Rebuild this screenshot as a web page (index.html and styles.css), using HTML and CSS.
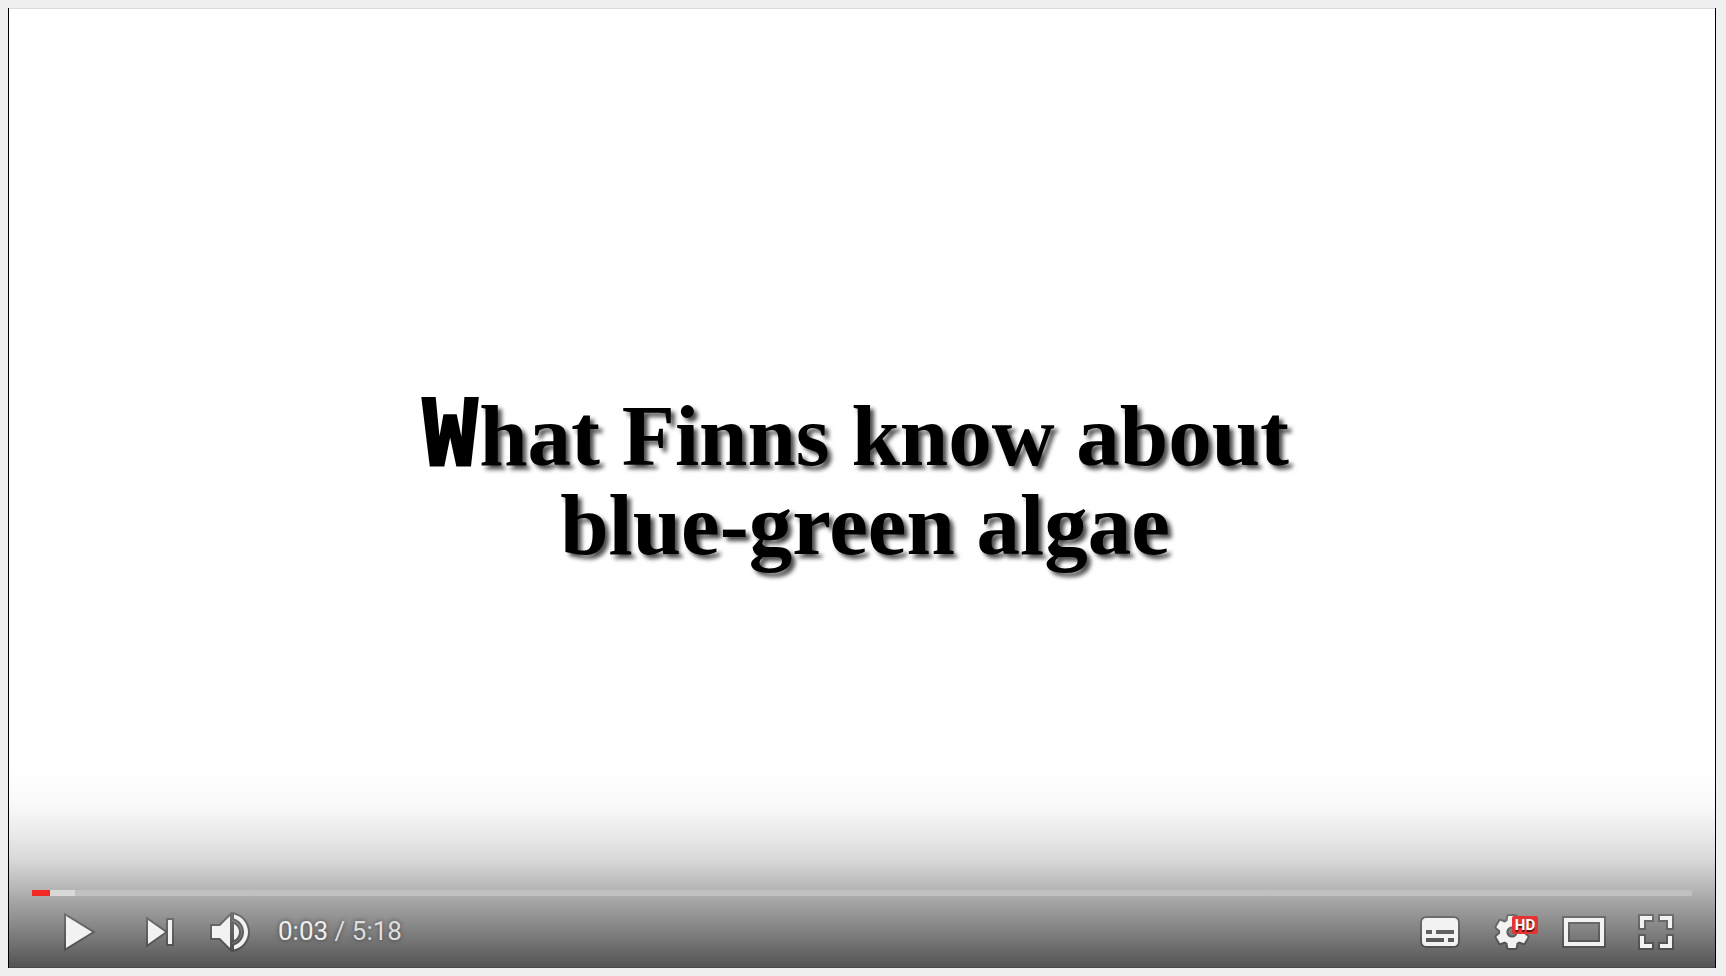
FILE: index.html
```html
<!DOCTYPE html>
<html lang="en">
<head>
<meta charset="utf-8">
<title>What Finns know about blue-green algae</title>
<link rel="stylesheet" href="styles.css">
</head>
<body>
<main class="player">
  <h1 class="title">
    <span class="title-line title-first"><span class="initial">W</span>hat Finns know about</span>
    <span class="title-line">blue-green algae</span>
  </h1>
  <div class="chrome">
    <input class="seek" type="range" min="0" max="318" value="3" aria-label="Seek">
    <div class="controls">
      <button class="btn btn-play" type="button" aria-label="Play">
        <svg class="icon" viewBox="0 0 36 36"><path d="M12 26V10L25 18Z"/></svg>
      </button>
      <button class="btn" type="button" aria-label="Next">
        <svg class="icon" viewBox="0 0 36 36"><path d="M12 24V12L20.5 18ZM22 12v12h2V12Z"/></svg>
      </button>
      <button class="btn" type="button" aria-label="Mute">
        <svg class="icon" viewBox="0 0 36 36"><path d="M8 21H12L17 26V10L12 15H8ZM19 14V22C20.48 21.32 21.5 19.77 21.5 18C21.5 16.26 20.48 14.74 19 14ZM19 11.29C21.89 12.15 24 14.83 24 18C24 21.17 21.89 23.85 19 24.71V26.77C23.01 25.86 26 22.28 26 18C26 13.72 23.01 10.14 19 9.23Z"/></svg>
      </button>
      <div class="time"><span class="current">0:03</span> / 5:18</div>
      <button class="btn btn-right" type="button" aria-label="Subtitles">
        <svg class="icon" viewBox="0 0 36 36"><path fill-rule="evenodd" d="M11 11C9.9 11 9 11.9 9 13V23C9 24.1 9.9 25 11 25H25C26.1 25 27 24.1 27 23V13C27 11.9 26.1 11 25 11ZM11 17H14V19H11ZM20 23H11V21H20ZM25 23H22V21H25ZM25 19H16V17H25Z"/></svg>
      </button>
      <button class="btn" type="button" aria-label="Settings">
        <svg class="icon" viewBox="0 0 36 36"><path fill-rule="evenodd" d="m23.94 18.78c.03-.25.05-.51.05-.78 0-.27-.02-.52-.05-.78l1.68-1.32c.15-.12.19-.33.09-.51l-1.6-2.76c-.09-.17-.31-.24-.48-.17l-1.99.8c-.41-.32-.86-.58-1.35-.78l-.3-2.12c-.02-.19-.19-.33-.39-.33h-3.2c-.2 0-.36.14-.39.33l-.3 2.12c-.48.2-.93.47-1.35.78l-1.99-.8c-.18-.07-.39 0-.48.17l-1.6 2.76c-.1.17-.05.39.09.51l1.68 1.32c-.03.25-.05.52-.05.78 0 .26.02.52.05.78l-1.68 1.32c-.15.12-.19.33-.09.51l1.6 2.76c.09.17.31.24.48.17l1.99-.8c.41.32.86.58 1.35.78l.3 2.12c.02.19.19.33.39.33h3.2c.2 0 .36-.14.39-.33l.3-2.12c.48-.2.93-.47 1.35-.78l1.99.8c.18.07.39 0 .48-.17l1.6-2.76c.09-.17.05-.39-.09-.51zm-5.94 2.01c-1.54 0-2.8-1.25-2.8-2.8 0-1.54 1.25-2.8 2.8-2.8 1.54 0 2.8 1.25 2.8 2.8 0 1.54-1.25 2.8-2.8 2.8z"/></svg>
        <span class="badge">HD</span>
      </button>
      <button class="btn" type="button" aria-label="Theater mode">
        <svg class="icon" viewBox="0 0 36 36"><path fill-rule="evenodd" d="M8 11H28V25H8ZM10 13V23H26V13Z"/></svg>
      </button>
      <button class="btn" type="button" aria-label="Full screen">
        <svg class="icon" viewBox="0 0 36 36"><path d="M10 16h2v-4h4v-2h-6ZM20 10v2h4v4h2v-6ZM24 24h-4v2h6v-6h-2ZM12 20h-2v6h6v-2h-4Z"/></svg>
      </button>
    </div>
  </div>
</main>
</body>
</html>
```
FILE: styles.css
```css
* {
  box-sizing: border-box;
}

body {
  margin: 0;
  padding: 8px 10px 8px 8px;
  min-height: 100vh;
  display: flex;
  background: #f0f0f0;
  font-family: Roboto, sans-serif;
}

.player {
  flex: 1;
  display: grid;
  background: #fff;
  border: solid #000;
  border-width: 0 1px;
  box-shadow: inset 0 1px #dcdcdc;
}

.title,
.chrome {
  grid-area: 1 / 1;
}

.title {
  margin: 0;
  padding: 0 0 16px 6px;
  align-self: center;
  text-align: center;
  color: #000;
  font: bold 87px/89px "Liberation Serif", serif;
  text-shadow: 4px 4px 4px rgba(0, 0, 0, 0.7);
}

.title-line {
  display: block;
}

.title-first {
  padding-right: 18px;
}

.initial {
  margin-right: 2px;
  font-family: "DejaVu Sans Mono", monospace;
  font-size: 90px;
  line-height: 1px;
  text-shadow: none;
  -webkit-text-stroke: 3px #000;
}

.chrome {
  align-self: end;
  display: flex;
  flex-direction: column;
  padding: 120px 23px 0;
  background: linear-gradient(
    to top,
    #4a4848 1px,
    #545454 1px,
    #808080 36px,
    #acacac 72px,
    #b4b4b4 78px,
    #d8d8d8 108px,
    #e6e6e6 128px,
    #f9f9f9 162px,
    #fff 198px
  );
}

.seek {
  appearance: none;
  width: 100%;
  height: 6px;
  margin: 0;
  background: linear-gradient(
    to right,
    #f12b24 18px,
    #d9d9d9 18px,
    #d9d9d9 43px,
    #c0c0c0 43px
  );
}

.seek::-webkit-slider-thumb {
  appearance: none;
  width: 1px;
  height: 6px;
}

.controls {
  display: flex;
  align-items: center;
}

.btn {
  position: relative;
  display: flex;
  justify-content: center;
  width: 72px;
  height: 72px;
  padding: 0;
  border: 0;
  background: none;
}

.btn-play {
  width: 92px;
}

.btn-right {
  margin-left: auto;
}

.icon {
  width: 72px;
  height: 72px;
  fill: #f2f2f2;
  stroke: rgba(0, 0, 0, 0.25);
  stroke-width: 2;
  paint-order: stroke;
}

.badge {
  position: absolute;
  top: 20px;
  left: 36px;
  width: 26px;
  height: 18px;
  border-radius: 2px;
  background: #e63434;
  color: #fff;
  font: bold 15px/18px Roboto, sans-serif;
  text-align: center;
  text-shadow: 0 2px #5c1515;
}

.time {
  padding: 0 0 2px 10px;
  color: #ddd;
  font-size: 26px;
  line-height: 70px;
  text-shadow: 0 0 4px rgba(0, 0, 0, 0.5);
}

.current {
  color: #eee;
}
```
